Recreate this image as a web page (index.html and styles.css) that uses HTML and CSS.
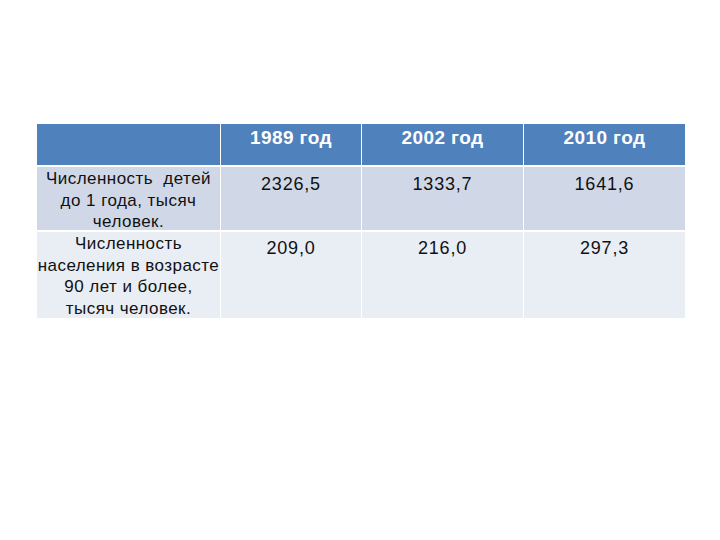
FILE: index.html
```html
<!DOCTYPE html>
<html lang="ru">
<head>
<meta charset="utf-8">
<title>Таблица</title>
<link rel="stylesheet" href="styles.css">
</head>
<body>
<div class="page">
  <div class="table">
    <div class="cell head"></div>
    <div class="cell head">1989 год</div>
    <div class="cell head">2002 год</div>
    <div class="cell head">2010 год</div>

    <div class="cell label r1">Численность&nbsp; детей<br>до 1 года, тысяч<br>человек.</div>
    <div class="cell num r1">2326,5</div>
    <div class="cell num r1">1333,7</div>
    <div class="cell num r1">1641,6</div>

    <div class="cell label r2">Численность<br>населения в возрасте<br>90 лет и более,<br>тысяч человек.</div>
    <div class="cell num r2">209,0</div>
    <div class="cell num r2">216,0</div>
    <div class="cell num r2">297,3</div>
  </div>
</div>
</body>
</html>
```
FILE: styles.css
```css
html, body {
  margin: 0;
  padding: 0;
  background: #ffffff;
}
.page {
  width: 720px;
  height: 540px;
  padding: 124px 0 0 37px;
  box-sizing: border-box;
  font-family: "Liberation Sans", Arial, sans-serif;
}
.table {
  display: grid;
  grid-template-columns: 183px 140px 161px 161px;
  grid-template-rows: 41px 63px 86px;
  column-gap: 1px;
  row-gap: 2px;
  width: 648px;
}
.cell {
  text-align: center;
  color: #000000;
  overflow: visible;
  box-sizing: border-box;
  min-height: 0;
}
.head {
  background: #4f81bd;
  color: #ffffff;
  font-weight: bold;
  font-size: 19px;
  line-height: 22px;
  letter-spacing: 0.4px;
  padding-top: 3px;
}
.r1 {
  background: #d0d8e8;
}
.r2 {
  background: #e9edf4;
}
.label {
  font-size: 17px;
  line-height: 21.7px;
  letter-spacing: 0.45px;
  white-space: nowrap;
  padding: 1px 0 0;
  color: #111111;
}
.num {
  font-size: 18px;
  line-height: 22px;
  letter-spacing: 0.8px;
  color: #111111;
}
.num.r1 {
  padding-top: 6px;
}
.num.r2 {
  padding-top: 5px;
}
```
